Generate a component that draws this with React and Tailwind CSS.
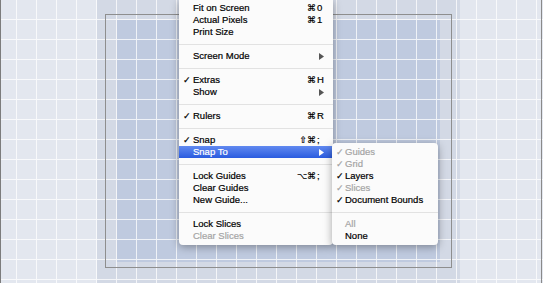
import React from "react";

function Arrow({ active }) {
  return (
    <svg width="5" height="7" viewBox="0 0 5 7" className="block">
      <polygon points="0,0 5,3.5 0,7" fill={active ? "#ffffff" : "#555555"} />
    </svg>
  );
}

function Item({ check, label, mods, keyChar, arrow, disabled, active, sub }) {
  const color = active ? "text-white" : disabled ? "text-[#a4a4a4]" : "text-black";
  return (
    <div
      className={
        "relative flex items-center h-[12px] leading-[12px] " +
        (sub ? "pl-[13px] pr-[9px] " : "pl-[14px] pr-[9px] ") +
        color +
        (active ? " bg-linear-to-b from-[#6189f0] to-[#2a5bdf]" : "")
      }
    >
      {check && (
        <span className="absolute top-0 left-[4px] text-[9px] font-['DejaVu_Sans',sans-serif]">
          ✓
        </span>
      )}
      <span className="flex-1 whitespace-nowrap">{label}</span>
      {(mods || keyChar) && (
        <span className="flex whitespace-nowrap">
          <span className="font-['DejaVu_Sans',sans-serif] text-[9px]">{mods}</span>
          <span className="w-[8px] pl-px">{keyChar}</span>
        </span>
      )}
      {arrow && <Arrow active={active} />}
    </div>
  );
}

function Sep() {
  return (
    <div className="h-[12px] flex items-center">
      <div className="h-px w-full bg-[#e2e2e2]" />
    </div>
  );
}

function Grid() {
  return (
    <svg width="543" height="283" className="absolute left-0 top-0">
      <defs>
        <pattern id="grid" x="16" y="19" width="20" height="20" patternUnits="userSpaceOnUse">
          <rect x="0" y="0" width="1" height="20" fill="#ffffff" fillOpacity="0.75" />
          <rect x="1" y="0" width="19" height="1" fill="#ffffff" fillOpacity="0.75" />
        </pattern>
      </defs>
      <rect x="0" y="0" width="543" height="283" fill="url(#grid)" />
    </svg>
  );
}

export default function App() {
  return (
    <div className="relative w-[543px] h-[283px] overflow-hidden bg-[#e3e7ef] font-['Liberation_Sans','DejaVu_Sans',sans-serif] text-[9.5px] [-webkit-text-stroke:0.2px_currentColor]">
      {/* canvas tones */}
      <div className="absolute left-[97px] top-0 w-[363px] h-full bg-[#d3d9e5]" />
      <div className="absolute left-[117px] top-[20px] w-[323px] h-[242px] bg-[#bfcadf]" />
      <Grid />
      {/* window edges */}
      <div className="absolute left-0 top-0 h-full w-px bg-[#7c7c7c]" />
      <div className="absolute left-[541px] top-0 h-full w-px bg-[#8a8a8a]" />
      {/* document bounds */}
      <div className="absolute left-[105px] top-[14px] w-[347px] h-[254px] border border-[#8e8e8e]" />

      {/* main menu */}
      <div className="absolute left-[179px] top-0 w-[154px] pt-[2px] pb-[3px] bg-[#fbfbfb] rounded-b-[4px] shadow-[0_2px_8px_rgba(0,0,0,0.35)]">
        <Item label="Fit on Screen" mods="⌘" keyChar="0" />
        <Item label="Actual Pixels" mods="⌘" keyChar="1" />
        <Item label="Print Size" />
        <Sep />
        <Item label="Screen Mode" arrow />
        <Sep />
        <Item check label="Extras" mods="⌘" keyChar="H" />
        <Item label="Show" arrow />
        <Sep />
        <Item check label="Rulers" mods="⌘" keyChar="R" />
        <Sep />
        <Item check label="Snap" mods="⇧⌘" keyChar=";" />
        <Item label="Snap To" arrow active />
        <Sep />
        <Item label="Lock Guides" mods="⌥⌘" keyChar=";" />
        <Item label="Clear Guides" />
        <Item label="New Guide..." />
        <Sep />
        <Item label="Lock Slices" />
        <Item label="Clear Slices" disabled />
      </div>

      {/* submenu */}
      <div className="absolute left-[332px] top-[143px] w-[106px] pt-[3px] pb-[3px] bg-[#fbfbfb] rounded-[4px] shadow-[0_2px_8px_rgba(0,0,0,0.35)]">
        <Item sub check disabled label="Guides" />
        <Item sub check disabled label="Grid" />
        <Item sub check label="Layers" />
        <Item sub check disabled label="Slices" />
        <Item sub check label="Document Bounds" />
        <Sep />
        <Item sub disabled label="All" />
        <Item sub label="None" />
      </div>
    </div>
  );
}
